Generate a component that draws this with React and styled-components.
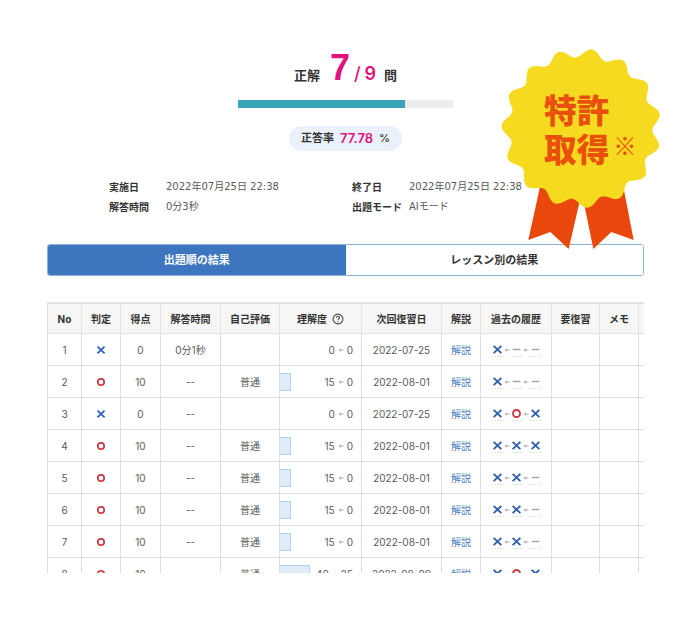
import React from "react";
import styled, { createGlobalStyle } from "styled-components";

const GlobalStyle = createGlobalStyle`
  * { box-sizing: border-box; }
  body {
    margin: 0;
    background: #fff;
    color: #5a5a5a;
    font: 10px/20px Inter, "Noto Sans CJK JP", sans-serif;
  }
`;

const Page = styled.main`
  position: relative;
  padding: 48px 46px 48px 47px;
`;

const Summary = styled.header`
  display: flex;
  flex-direction: column;
  align-items: center;
`;

const Score = styled.h1`
  display: flex;
  align-items: baseline;
  margin: 0;
  height: 52px;
  color: #333;
  font-size: 13px;
  line-height: 40px;
  font-weight: 700;
`;

const Correct = styled.span`
  margin-left: 10px;
  color: #e0127c;
  font-family: "Liberation Sans", sans-serif;
  font-size: 36px;
`;

const Total = styled.span`
  display: flex;
  gap: 4px;
  margin: 0 8px 0 4px;
  color: #e0127c;
  font-size: 18px;
  font-weight: 600;
`;

const Slash = styled.span`
  font-weight: 500;
`;

const Track = styled.div`
  width: 36%;
  height: 8px;
  background: #ececec;
`;

const Fill = styled.div`
  height: 100%;
  background: #38a6b8;
`;

const Rate = styled.p`
  display: flex;
  gap: 6px;
  margin: 18px 0 0;
  padding: 0 12px;
  border-radius: 13px;
  background: #ebf1fb;
  color: #333;
  font-size: 11px;
  line-height: 25px;
  font-weight: 700;
`;

const RateValue = styled.strong`
  color: #e0127c;
  font-size: 13px;
  font-weight: 600;
`;

const Percent = styled.span`
  font-weight: 500;
`;

const Details = styled.dl`
  display: grid;
  grid-template-columns: 57px 186px 57px 1fr;
  margin: 26px 0 27px;
  padding-left: 62px;
`;

const Term = styled.dt`
  color: #333;
  font-weight: 700;
`;

const Value = styled.dd`
  margin: 0;
  font-family: "DejaVu Sans", "Noto Sans CJK JP", sans-serif;
`;

const Tabs = styled.div`
  display: flex;
  border: 1px solid #8fb3d2;
  border-radius: 3px;
  overflow: hidden;
`;

const Tab = styled.button`
  flex: 1;
  border: 0;
  padding: 0;
  background: ${(p) => (p.$active ? "#3d75be" : "#fff")};
  color: ${(p) => (p.$active ? "#fff" : "#333")};
  font: 700 11px/30px Inter, "Noto Sans CJK JP", sans-serif;
`;

const TableClip = styled.div`
  max-height: 271px;
  margin-top: 26px;
  overflow: hidden;
`;

const Table = styled.table`
  width: 100%;
  table-layout: fixed;
  border-collapse: separate;
  border-spacing: 0;
  border-left: 1px solid #dedede;
`;

const HeadCell = styled.th`
  height: 32px;
  padding: 0;
  border: solid #e2e2e2;
  border-width: 2px 1px 1px 0;
  background: #f6f6f6;
  color: #333;
  font-weight: 700;
  white-space: nowrap;

  &:last-child { border-right: 0; }
`;

const Cell = styled.td`
  height: 32px;
  padding: 0;
  border: solid #dedede;
  border-width: 0 1px 1px 0;
  text-align: center;
  white-space: nowrap;

  &:last-child { border-right: 0; }
`;

const HeadWithIcon = styled.span`
  display: flex;
  align-items: center;
  justify-content: center;
  gap: 5px;
`;

const Level = styled.div`
  display: grid;
  align-items: center;
`;

const LevelTrack = styled.div`
  grid-area: 1 / 1;
  width: 92%;
`;

const LevelBar = styled.div`
  height: 18px;
  border: 1px solid #b5d1ea;
  border-left: 0;
  background: #e0edf9;
`;

const LevelText = styled.span`
  grid-area: 1 / 1;
  display: flex;
  align-items: center;
  justify-content: flex-end;
  gap: 3px;
  padding-right: 8px;
`;

const Link = styled.a`
  color: #4a7fc4;
  text-decoration: none;
`;

const History = styled.div`
  display: flex;
  align-items: center;
  justify-content: center;
`;

const HistoryItem = styled.span`
  display: flex;
  align-items: center;
  justify-content: center;
  width: 13px;
  height: 14px;
  border-bottom: 1px dotted #dcdcdc;
`;

const Icon = styled.svg`
  display: block;
  flex: none;
  margin: ${(p) => (p.$center ? "0 auto" : "0")};
`;

const Badge = styled.svg`
  position: absolute;
  top: 40px;
  right: 20px;
  font-family: "Noto Sans CJK JP", sans-serif;
`;

function Mark({ type, size = 10, center }) {
  return (
    <Icon width={size} height={size} viewBox="0 0 10 10" fill="none" $center={center}>
      {type === "x" && <path d="M1.5 1.7 8.5 8.3M8.5 1.7 1.5 8.3" stroke="#2f62b5" strokeWidth="1.8" />}
      {type === "o" && <circle cx="5" cy="5" r="3.2" stroke="#cf3942" strokeWidth="1.7" />}
      {type === "-" && <path d="M1.5 5h7" stroke="#a5a5a5" strokeWidth="1.3" />}
    </Icon>
  );
}

function Arrow() {
  return (
    <Icon width="6" height="6" viewBox="0 0 6 6">
      <path d="M.5 3 3 1.3v3.4z" fill="#b0b0b0" />
      <path d="M2 3h3.7" stroke="#b0b0b0" strokeWidth="1" />
    </Icon>
  );
}

function HelpIcon() {
  return (
    <Icon width="12" height="12" viewBox="0 0 12 12" fill="none" stroke="#444">
      <circle cx="6" cy="6" r="4.9" strokeWidth="1.1" />
      <path d="M4.4 4.8c0-2 3.2-2 3.2 0C7.6 5.9 6 5.9 6 7.1M6 8v1.1" strokeWidth="1.1" />
    </Icon>
  );
}

const scallop = Array.from({ length: 240 }, (_, i) => {
  const angle = (i / 240) * Math.PI * 2;
  const radius = 226 + 13 * Math.cos(15 * (angle - 0.13));
  const x = 274 + radius * Math.sin(angle);
  const y = 265 - radius * Math.cos(angle);
  return `${x.toFixed(1)},${y.toFixed(1)}`;
}).join(" ");

function PatentBadge() {
  return (
    <Badge width="180" height="220" viewBox="0 0 540 660">
      <path d="M150 440 115 600 181 576 236 627 270 480ZM280 480 310 627 364 576 431 600 400 440Z" fill="#e9470b" />
      <polygon points={scallop} fill="#f5da20" />
      <g fill="#e9500e" fontWeight="900">
        <text x="162" y="249" fontSize="98">特許</text>
        <text x="162" y="366" fontSize="98">取得</text>
        <text x="370" y="345" fontSize="70" fontWeight="400">※</text>
      </g>
    </Badge>
  );
}

const columns = [
  ["No", 34], ["判定", 39], ["得点", 40], ["解答時間", 60], ["自己評価", 59], ["理解度", 82],
  ["次回復習日", 80], ["解説", 39], ["過去の履歴", 71], ["要復習", 48], ["メモ", 39], ["", 5],
];

const rows = [
  { mark: "x", points: 0, time: "0分1秒", level: [0, 0], next: "2022-07-25", history: "x--" },
  { mark: "o", points: 10, time: "--", self: "普通", level: [15, 0], next: "2022-08-01", history: "x--" },
  { mark: "x", points: 0, time: "--", level: [0, 0], next: "2022-07-25", history: "xox" },
  { mark: "o", points: 10, time: "--", self: "普通", level: [15, 0], next: "2022-08-01", history: "xxx" },
  { mark: "o", points: 10, time: "--", self: "普通", level: [15, 0], next: "2022-08-01", history: "xx-" },
  { mark: "o", points: 10, time: "--", self: "普通", level: [15, 0], next: "2022-08-01", history: "xx-" },
  { mark: "o", points: 10, time: "--", self: "普通", level: [15, 0], next: "2022-08-01", history: "xx-" },
  { mark: "o", points: 10, time: "--", self: "普通", level: [40, 25], next: "2022-08-09", history: "xox" },
];

function ResultRow({ number, row }) {
  const [level, previous] = row.level;
  return (
    <tr>
      <Cell>{number}</Cell>
      <Cell><Mark type={row.mark} center /></Cell>
      <Cell>{row.points}</Cell>
      <Cell>{row.time}</Cell>
      <Cell>{row.self}</Cell>
      <Cell>
        <Level>
          <LevelTrack>{level > 0 && <LevelBar style={{ width: `${level}%` }} />}</LevelTrack>
          <LevelText>{level}<Arrow />{previous}</LevelText>
        </Level>
      </Cell>
      <Cell>{row.next}</Cell>
      <Cell><Link href="#explanation">解説</Link></Cell>
      <Cell>
        <History>
          {[...row.history].map((type, i) => (
            <React.Fragment key={i}>
              {i > 0 && <Arrow />}
              <HistoryItem><Mark type={type} size={11} /></HistoryItem>
            </React.Fragment>
          ))}
        </History>
      </Cell>
      <Cell />
      <Cell />
      <Cell />
    </tr>
  );
}

export default function App() {
  return (
    <Page>
      <GlobalStyle />
      <Summary>
        <Score>
          正解<Correct>7</Correct>
          <Total><Slash>/</Slash>9</Total>問
        </Score>
        <Track><Fill style={{ width: `${(7 / 9) * 100}%` }} /></Track>
        <Rate>正答率<RateValue>77.78</RateValue><Percent>%</Percent></Rate>
      </Summary>
      <Details>
        <Term>実施日</Term><Value>2022年07月25日 22:38</Value>
        <Term>終了日</Term><Value>2022年07月25日 22:38</Value>
        <Term>解答時間</Term><Value>0分3秒</Value>
        <Term>出題モード</Term><Value>AIモード</Value>
      </Details>
      <Tabs role="tablist">
        <Tab type="button" role="tab" aria-selected="true" $active>出題順の結果</Tab>
        <Tab type="button" role="tab" aria-selected="false">レッスン別の結果</Tab>
      </Tabs>
      <TableClip>
        <Table>
          <colgroup>
            {columns.map(([, width], i) => <col key={i} width={width} />)}
          </colgroup>
          <thead>
            <tr>
              {columns.map(([label], i) => (
                <HeadCell key={i} scope="col">
                  {label === "理解度" ? <HeadWithIcon>{label}<HelpIcon /></HeadWithIcon> : label}
                </HeadCell>
              ))}
            </tr>
          </thead>
          <tbody>
            {rows.map((row, i) => <ResultRow key={i} number={i + 1} row={row} />)}
          </tbody>
        </Table>
      </TableClip>
      <PatentBadge />
    </Page>
  );
}
